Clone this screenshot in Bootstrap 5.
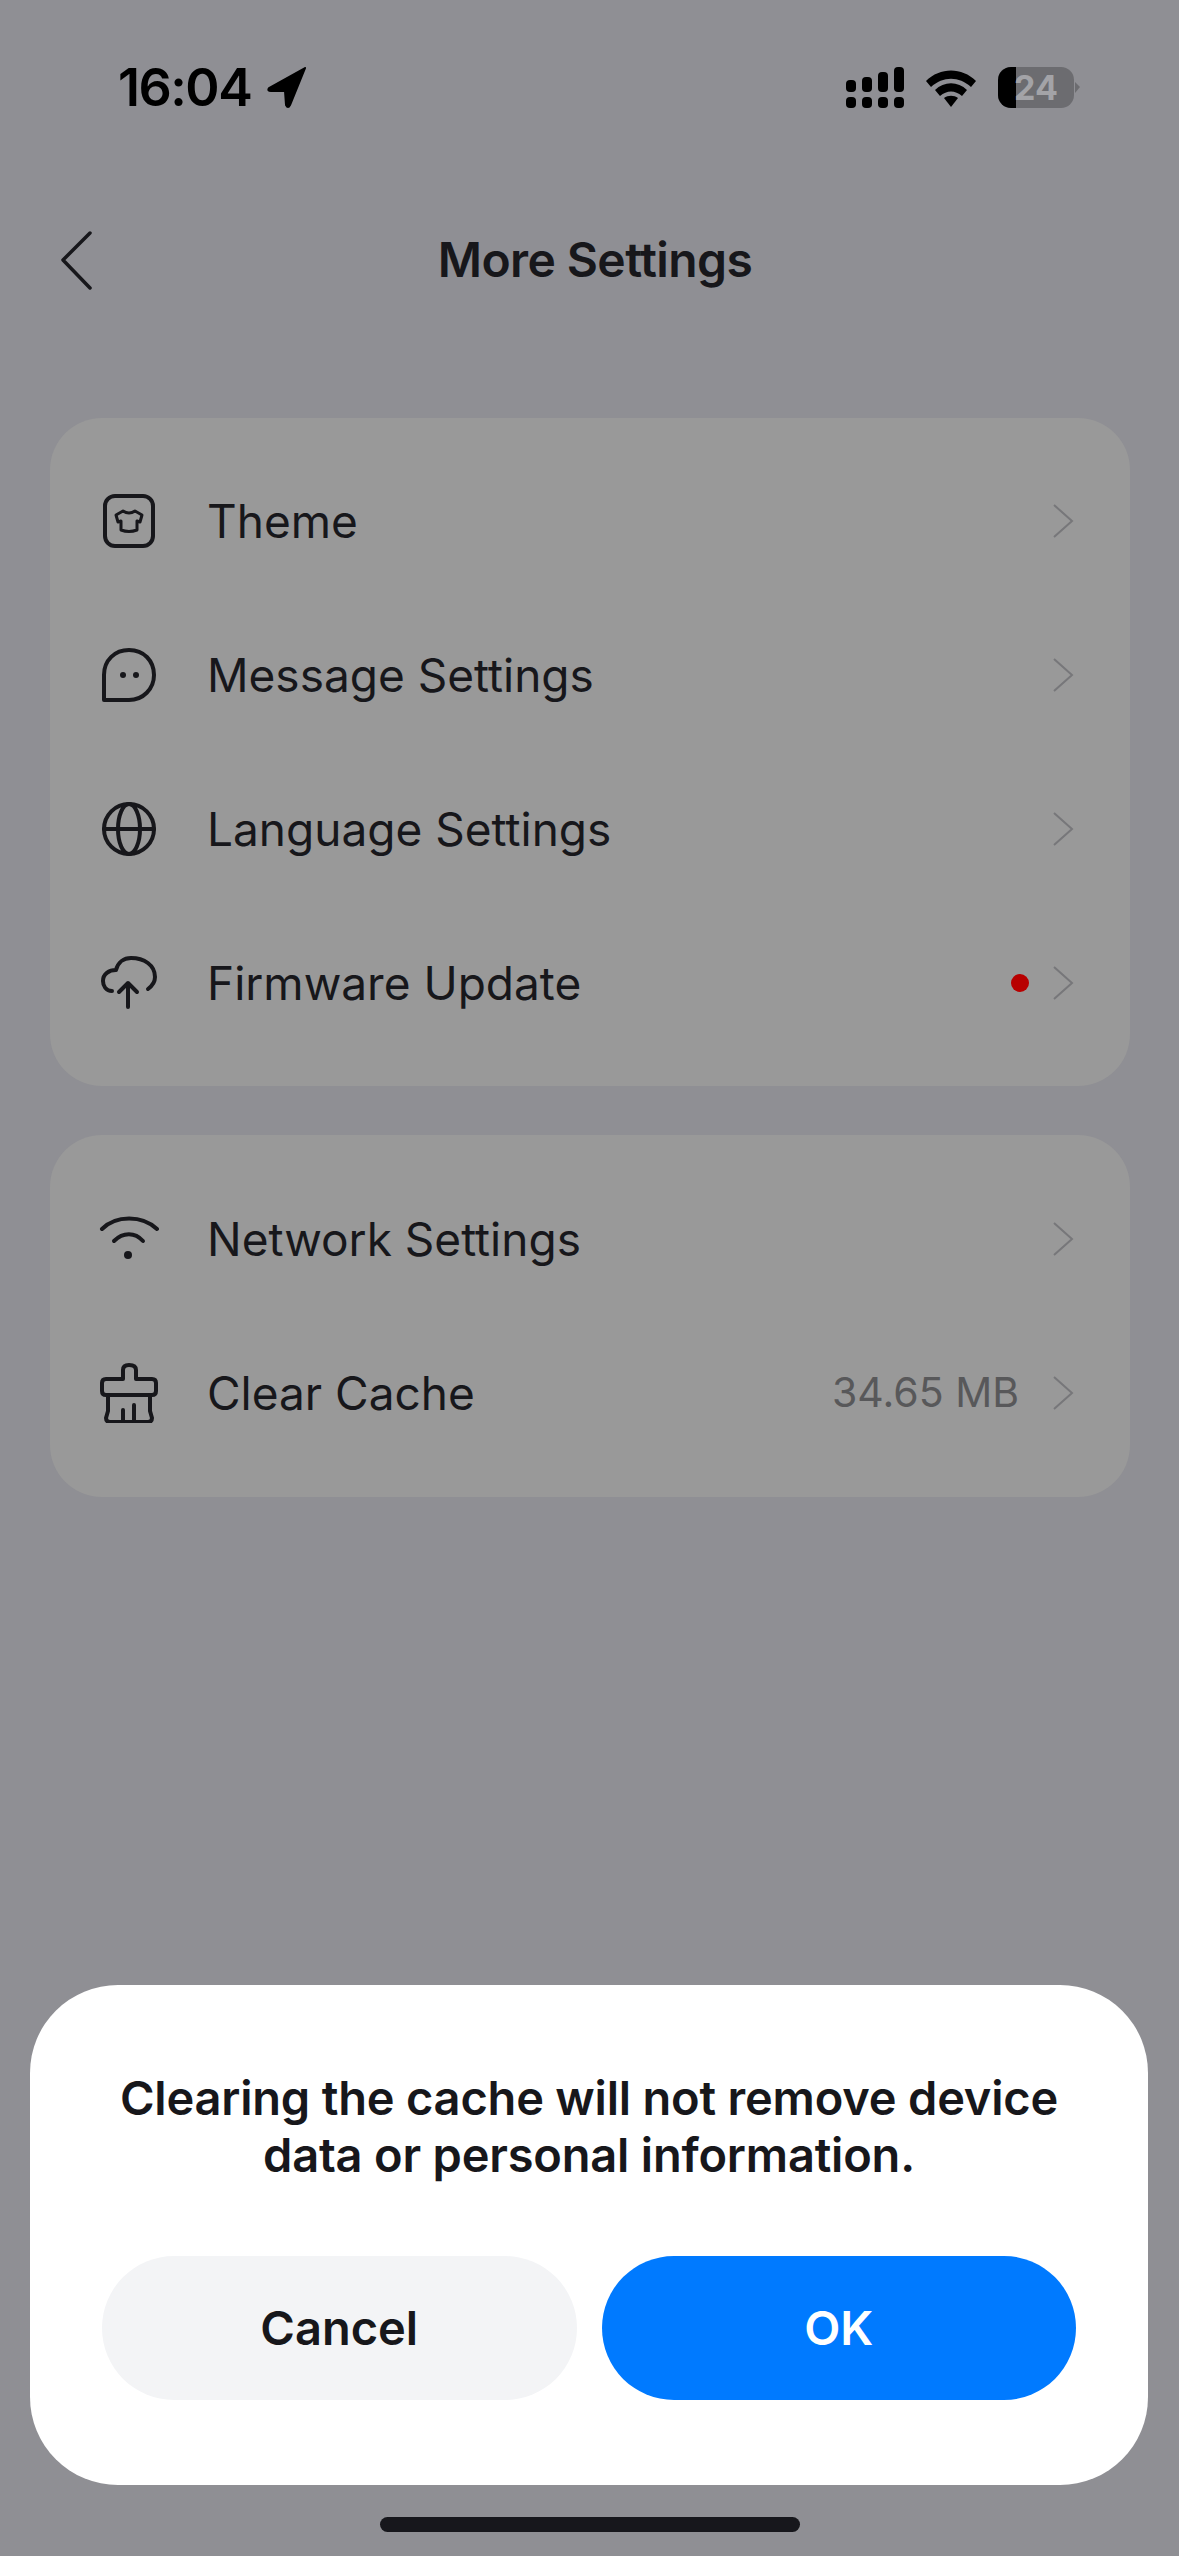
<!DOCTYPE html>
<html lang="en">
<head>
  <meta charset="UTF-8">
  <meta name="viewport" content="width=device-width, initial-scale=1.0">
  <title>More Settings</title>
  <link href="https://cdn.jsdelivr.net/npm/bootstrap@5.3.3/dist/css/bootstrap.min.css" rel="stylesheet">
  <style>
    body {
      background: #8f8f94;
      font-family: Inter, "Liberation Sans", sans-serif;
      color: #17171b;
      width: 1179px;
      height: 2556px;
      overflow: hidden;
    }

    .phone-screen { height: 2556px; padding-top: 67px; }

    /* status bar */
    .status-row { height: 41px; padding: 0 99px 0 118px; }
    .status-time { font-size: 52px; font-weight: 600; line-height: 41px; letter-spacing: -1.5px; color: #000; }
    .status-right { gap: 22px; }
    .status-batt { width: 82px; height: 41px; }

    /* header */
    .title-row { height: 70px; margin-top: 117px; padding: 0 89px 0 60px; }
    .title-text { font-size: 48px; font-weight: 600; line-height: 70px; letter-spacing: -.6px; margin: 0; }
    .back-ico { width: 40px; height: 60px; }

    /* settings cards */
    .set-card {
      margin: 0 49px 0 50px;
      background: #999999;
      border: 0;
      border-radius: 52px;
      padding: 26px 0;
    }
    .set-card + .set-card { margin-top: 49px; padding: 27px 0; }
    .group-one { margin-top: 123px; }
    .set-row {
      background: transparent;
      border: 0;
      height: 154px;
      padding: 0 55px 0 49px;
      color: #17171b;
      font-size: 46px;
      gap: 24px;
    }
    .row-ico { width: 60px; height: 60px; fill: none; stroke: #17171b; stroke-width: 4; stroke-linecap: round; stroke-linejoin: round; flex: none; margin-right: 24px; }
    .chev-ico { width: 22px; height: 36px; flex: none; }
    .cache-size { color: #58585a; font-size: 41px; margin-right: 10px; }
    .new-dot { width: 18px; height: 18px; background: #b80000; border-radius: 50%; }

    /* dialog */
    .dialog-sheet {
      position: absolute;
      left: 30px;
      top: 1985px;
      width: 1118px;
      height: 500px;
      background: #fff;
      border: 0;
      border-radius: 88px;
      padding: 84px 72px 0;
    }
    .dialog-text { font-size: 47px; font-weight: 600; line-height: 57px; text-align: center; margin: 0 0 73px; color: #17171b; letter-spacing: -.2px; }
    .dialog-btns { gap: 25px; }
    .dialog-btn { height: 144px; border-radius: 72px; border: 0; font-size: 47px; font-weight: 600; flex: 1 1 0; }
    .btn-cancel { background: #f3f4f6; color: #17171b; }
    .btn-ok { background: #007aff; color: #fff; }
    .home-bar { position: absolute; left: 380px; top: 2517px; width: 420px; height: 15px; background: #17171c; border-radius: 8px; }
  </style>
</head>

<body>
  <div class="phone-screen position-relative">

    <!-- status bar -->
    <div class="status-row d-flex justify-content-between align-items-center">
      <div class="d-flex align-items-center gap-3">
        <span class="status-time">16:04</span>
        <svg width="40" height="41" viewBox="0 0 40 41"><path d="M38 1 L2 21 Q0 24 4 24 L18 24 L19 38 Q21 42 23 38 Z" fill="#000" stroke="#000" stroke-width="2" stroke-linejoin="round"/></svg>
      </div>
      <div class="status-right d-flex align-items-center">
        <svg width="58" height="41" viewBox="0 0 58 41" fill="#000">
          <rect x="0" y="13" width="10" height="12" rx="4"/><rect x="16" y="10" width="10" height="15" rx="4"/><rect x="32" y="5" width="10" height="20" rx="4"/><rect x="48" y="0" width="10" height="25" rx="4"/>
          <rect x="0" y="30" width="10" height="11" rx="4"/><rect x="16" y="30" width="10" height="11" rx="4"/><rect x="32" y="30" width="10" height="11" rx="4"/><rect x="48" y="30" width="10" height="11" rx="4"/>
        </svg>
        <svg width="50" height="38" viewBox="0 0 50 38" fill="#000">
          <path d="M0 12 C14 -2 36 -2 50 12 L45 18 C33 7 17 7 5 18 Z"/>
          <path d="M9 21 C18 12 32 12 41 21 L36 27 C29 21 21 21 14 27 Z"/>
          <path d="M18 29 C22 26 28 26 32 29 L25 38 Z"/>
        </svg>
        <svg class="status-batt" viewBox="0 0 82 41">
          <rect x="0" y="0" width="76" height="41" rx="13" fill="#6c6c70"/>
          <path d="M13 0 H18 V41 H13 A13 13 0 0 1 0 28 V13 A13 13 0 0 1 13 0 Z" fill="#000"/>
          <path d="M77 15 L82 20 L77 26 Z" fill="#6c6c70"/>
          <text x="38" y="33" text-anchor="middle" font-family="Inter, sans-serif" font-size="34" font-weight="700" fill="#a3a3a7">24</text>
        </svg>
      </div>
    </div>

    <!-- header -->
    <div class="title-row d-flex align-items-center">
      <svg class="back-ico" viewBox="0 0 40 60"><path d="M30 3 L3 30 L30 58" fill="none" stroke="#17171b" stroke-width="3.5" stroke-linecap="round" stroke-linejoin="round"/></svg>
      <h1 class="title-text flex-fill text-center">More Settings</h1>
    </div>

    <!-- first group -->
    <div class="card set-card group-one">
      <div class="list-group list-group-flush">
        <div class="list-group-item set-row d-flex align-items-center">
          <svg class="row-ico" viewBox="0 0 60 60">
            <rect x="6" y="5" width="48" height="50" rx="10"/>
            <path d="M24 20 Q30 24 36 20 L43 24 L41 31 L38 30 V39 Q30 42 22 39 V30 L19 31 L17 24 Z" stroke-width="3"/>
          </svg>
          <span class="flex-fill">Theme</span>
          <svg class="chev-ico" viewBox="0 0 22 36"><path d="M1 2 L19 18 L1 34" fill="none" stroke="#77777a" stroke-width="2"/></svg>
        </div>
        <div class="list-group-item set-row d-flex align-items-center">
          <svg class="row-ico" viewBox="0 0 60 60">
            <path d="M5 55 V30 C5 15 16 5 30 5 C45 5 55 16 55 30 C55 44 44 55 30 55 Z"/>
            <circle cx="24" cy="30" r="3" fill="#17171b" stroke="none"/>
            <circle cx="37" cy="30" r="3" fill="#17171b" stroke="none"/>
          </svg>
          <span class="flex-fill">Message Settings</span>
          <svg class="chev-ico" viewBox="0 0 22 36"><path d="M1 2 L19 18 L1 34" fill="none" stroke="#77777a" stroke-width="2"/></svg>
        </div>
        <div class="list-group-item set-row d-flex align-items-center">
          <svg class="row-ico" viewBox="0 0 60 60">
            <circle cx="30" cy="30" r="25"/>
            <ellipse cx="30" cy="30" rx="11" ry="25"/>
            <path d="M5 30 H55"/>
          </svg>
          <span class="flex-fill">Language Settings</span>
          <svg class="chev-ico" viewBox="0 0 22 36"><path d="M1 2 L19 18 L1 34" fill="none" stroke="#77777a" stroke-width="2"/></svg>
        </div>
        <div class="list-group-item set-row d-flex align-items-center">
          <svg class="row-ico" viewBox="0 0 60 60">
            <path d="M13 38 C7 38 4 33 4 28 C4 21 10 17 17 17 C19 9 25 5 32 5 C45 5 56 12 56 24 C56 29 53 33 49 36"/>
            <path d="M29 54 V30 M20 39 L29 30 L38 39"/>
          </svg>
          <span class="flex-fill">Firmware Update</span>
          <span class="new-dot"></span>
          <svg class="chev-ico" viewBox="0 0 22 36"><path d="M1 2 L19 18 L1 34" fill="none" stroke="#77777a" stroke-width="2"/></svg>
        </div>
      </div>
    </div>

    <!-- second group -->
    <div class="card set-card">
      <div class="list-group list-group-flush">
        <div class="list-group-item set-row d-flex align-items-center">
          <svg class="row-ico" viewBox="0 0 60 60">
            <path d="M3 20 C17 6 43 6 58 20"/>
            <path d="M15 32 C24 23 36 23 44 32"/>
            <circle cx="29" cy="46" r="4" fill="#17171b" stroke="none"/>
          </svg>
          <span class="flex-fill">Network Settings</span>
          <svg class="chev-ico" viewBox="0 0 22 36"><path d="M1 2 L19 18 L1 34" fill="none" stroke="#77777a" stroke-width="2"/></svg>
        </div>
        <div class="list-group-item set-row d-flex align-items-center">
          <svg class="row-ico" viewBox="0 0 60 60">
            <path d="M24 16 V7 Q24 2 30 2 Q37 2 37 7 V16 H53 Q57 16 57 20 V28 Q57 32 53 32 H7 Q3 32 3 28 V20 Q3 16 7 16 Z"/>
            <path d="M9 32 V48 L7 55 Q7 59 11 59 H49 Q53 59 53 55 L51 48 V32"/>
            <path d="M24 47 V59 M35 42 V59"/>
          </svg>
          <span class="flex-fill">Clear Cache</span>
          <span class="cache-size">34.65 MB</span>
          <svg class="chev-ico" viewBox="0 0 22 36"><path d="M1 2 L19 18 L1 34" fill="none" stroke="#77777a" stroke-width="2"/></svg>
        </div>
      </div>
    </div>

    <!-- confirm dialog -->
    <div class="card dialog-sheet">
      <p class="dialog-text">Clearing the cache will not remove device<br>data or personal information.</p>
      <div class="dialog-btns d-flex">
        <button type="button" class="btn dialog-btn btn-cancel">Cancel</button>
        <button type="button" class="btn dialog-btn btn-ok">OK</button>
      </div>
    </div>
    <div class="home-bar"></div>
  </div>

  <script src="https://cdn.jsdelivr.net/npm/bootstrap@5.3.3/dist/js/bootstrap.bundle.min.js"></script>
</body>
</html>
